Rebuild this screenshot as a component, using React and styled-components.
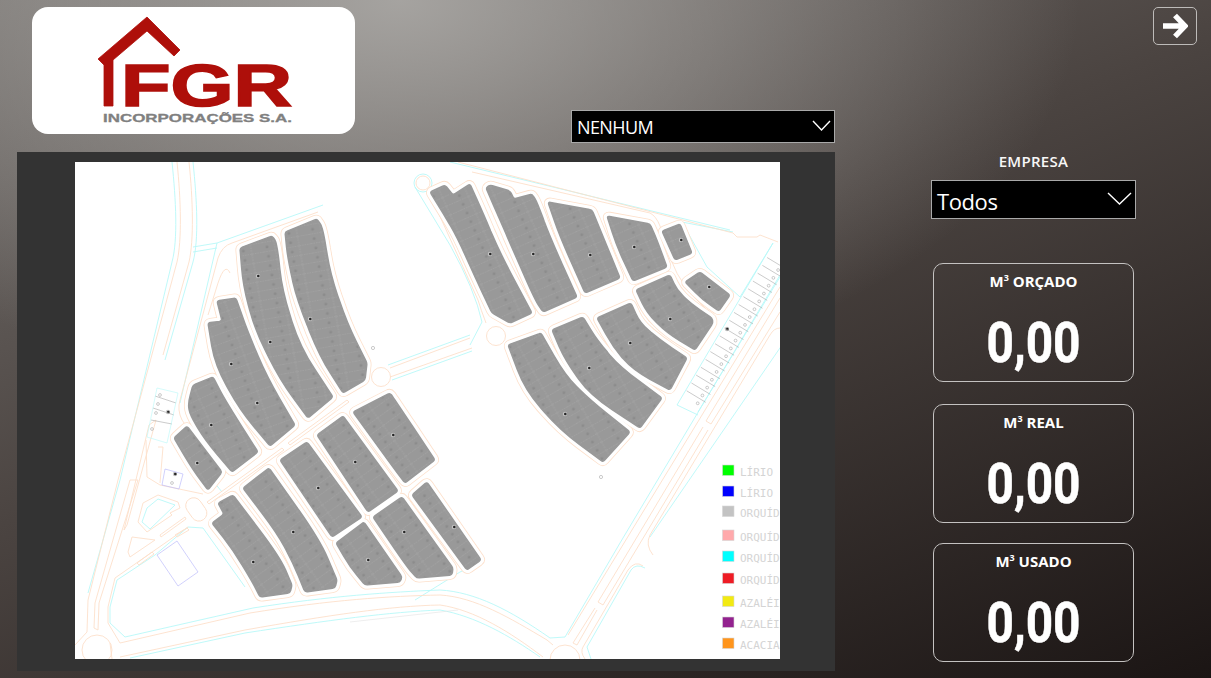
import styled, { createGlobalStyle } from 'styled-components';

const GlobalStyle = createGlobalStyle`
  html, body { margin: 0; padding: 0; background: #1c1615; }
  * { box-sizing: border-box; }
`;

const Page = styled.div`
  width: 1211px;
  height: 678px;
  overflow: hidden;
  display: grid;
  grid-template-columns: 835px 1fr;
  font-family: "Open Sans", "Noto Sans", sans-serif;
  color: #fff;
  background:
    radial-gradient(ellipse 680px 400px at 33% 0, rgba(172, 170, 167, 0.9), rgba(172, 170, 167, 0) 100%),
    linear-gradient(158deg, #75716e 0%, #4b4441 45%, #1b1514 100%);
`;

const LeftCol = styled.div`
  padding-left: 17px;
  display: flex;
  flex-direction: column;
`;

const TopRow = styled.div`
  height: 152px;
  display: flex;
  align-items: flex-start;
  justify-content: space-between;
`;

const LogoBox = styled.div`
  width: 323px;
  height: 127px;
  margin: 7px 0 0 15px;
  background: #fff;
  border-radius: 16px;
  svg { display: block; }
`;

const Select = styled.div`
  display: flex;
  align-items: center;
  justify-content: space-between;
  background: #000;
  border: 1px solid #a9a9a9;
  width: ${(p) => p.$w}px;
  height: ${(p) => p.$h}px;
  margin-top: ${(p) => p.$top || 0}px;
  padding: 0 2px 0 5px;
  font-size: ${(p) => p.$fs}px;
  letter-spacing: ${(p) => p.$ls}px;
  line-height: 1;
`;

const SelectText = styled.span`
  padding-top: ${(p) => p.$pt}px;
`;

const ChevronIcon = styled.svg`
  display: block;
  margin-top: -3px;
`;

const MapPanel = styled.div`
  width: 818px;
  height: 519px;
  background: #333;
  padding: 10px 0 0 58px;
`;

const MapSheet = styled.svg`
  display: block;
  width: 705px;
  height: 497px;
  background: #fff;
`;

const RightCol = styled.div`
  padding-left: 96px;
  display: flex;
  flex-direction: column;
  align-items: flex-start;
`;

const ArrowBtn = styled.button`
  align-self: flex-end;
  width: 44px;
  height: 38px;
  margin: 7px 14px 0 0;
  padding: 0;
  display: flex;
  align-items: center;
  justify-content: center;
  background: transparent;
  border: 1px solid #bdbbb9;
  border-radius: 5px;
`;

const FieldLabel = styled.div`
  width: 205px;
  margin-top: 107px;
  margin-bottom: 9px;
  height: 19px;
  line-height: 19px;
  text-align: center;
  font-size: 15px;
  font-weight: 600;
  letter-spacing: 0.3px;
  color: #f7f7f7;
`;

const Cards = styled.div`
  margin: 44px 0 0 2px;
  display: flex;
  flex-direction: column;
`;

const Card = styled.div`
  width: 201px;
  height: 119px;
  margin-top: ${(p) => p.$mt}px;
  border: 1px solid #c4c2c1;
  border-radius: 10px;
  text-align: center;
  padding-top: 8px;
`;

const CardTitle = styled.div`
  font-size: 15px;
  line-height: 19px;
  font-weight: 700;
  sup { font-size: 9px; line-height: 0; vertical-align: 6px; }
`;

const CardValue = styled.div`
  font-family: Roboto, "Open Sans", sans-serif;
  font-weight: 700;
  font-size: 55px;
  line-height: 64px;
  margin-top: 20px;
  transform: scaleX(0.87);
  -webkit-text-stroke: 0.5px #fff;
`;

const Chevron = ({ w, h }) => (
  <ChevronIcon width={w + 4} height={h + 4} viewBox={`-2 -2 ${w + 4} ${h + 4}`}>
    <polyline points={`0,0 ${w / 2},${h} ${w},0`} fill="none" stroke="#fff" strokeWidth="1.4" />
  </ChevronIcon>
);

// rounds a block outline: soft bends become curves, real corners stay tight
const smooth = (str) => {
  const pts = str.split(' ').map((s) => s.split(',').map(Number));
  const n = pts.length;
  let d = '';
  pts.forEach((v, i) => {
    const a = pts[(i + n - 1) % n];
    const b = pts[(i + 1) % n];
    const ax = a[0] - v[0];
    const ay = a[1] - v[1];
    const bx = b[0] - v[0];
    const by = b[1] - v[1];
    const la = Math.hypot(ax, ay);
    const lb = Math.hypot(bx, by);
    const cos = (ax * bx + ay * by) / (la * lb);
    const soft = cos < -0.85;
    const ca = soft ? la * 0.45 : Math.min(2.5, la * 0.4);
    const cb = soft ? lb * 0.45 : Math.min(2.5, lb * 0.4);
    const p1 = [v[0] + (ax / la) * ca, v[1] + (ay / la) * ca];
    const p2 = [v[0] + (bx / lb) * cb, v[1] + (by / lb) * cb];
    d += `${i === 0 ? 'M' : 'L'}${p1[0].toFixed(1)} ${p1[1].toFixed(1)} Q${v[0]} ${v[1]} ${p2[0].toFixed(1)} ${p2[1].toFixed(1)} `;
  });
  return `${d}Z`;
};

// block outlines in page coordinates, a is the direction of the lots
const blocks = [
  { a: -24, p: '430,192 445,185 453,195 470,184 483,213 500,253 532,313 510,323 492,313 475,277 457,237 443,213' },
  { a: -24, p: '486,188 490,185 510,191 514,199 532,194 537,202 550,237 577,297 543,312 535,300 513,250 500,220' },
  { a: -24, p: '548,202 592,210 597,222 620,278 585,293 560,237' },
  { a: -24, p: '607,216 650,224 657,240 667,267 633,281 617,247' },
  { a: -24, p: '662,231 680,224 692,253 675,260' },
  { a: -30, p: '685,282 700,272 730,295 719,311 703,300' },
  { a: -30, p: '636,290 670,275 677,290 690,303 712,318 713,323 695,350 667,333 647,313' },
  { a: -30, p: '597,318 631,303 640,323 660,340 687,358 670,390 633,370 613,347' },
  { a: -30, p: '552,330 583,317 597,340 620,367 662,398 640,428 590,395 565,360' },
  { a: -30, p: '508,345 541,333 565,375 590,400 630,432 603,462 560,430 525,390' },
  { a: -10, p: '285,232 317,219 323,228 330,273 347,323 367,363 365,380 343,393 320,357 297,300 288,260' },
  { a: -10, p: '240,248 272,236 277,243 282,290 300,347 333,397 308,418 280,380 255,330 243,285' },
  { a: -20, p: '208,323 222,321 217,301 236,298 247,330 267,377 295,425 270,446 240,410 215,365' },
  { a: -25, p: '188,403 193,385 213,377 225,400 258,452 232,472 205,440 190,415' },
  { a: -35, p: '174,438 187,426 222,472 208,490 193,470' },
  { a: -36, p: '353,412 390,393 395,400 435,460 405,483 395,470' },
  { a: -36, p: '317,435 343,416 398,491 368,512' },
  { a: -36, p: '280,460 307,442 362,517 332,537' },
  { a: -36, p: '243,488 269,468 320,540 337,580 335,588 305,592 293,563 277,533' },
  { a: -36, p: '212,523 224,514 218,503 233,495 280,557 292,585 290,593 260,597 253,583 233,550' },
  { a: -36, p: '336,543 364,522 402,577 400,582 365,585 350,567' },
  { a: -36, p: '373,517 402,497 453,568 452,575 417,578 407,567' },
  { a: -36, p: '412,495 427,482 481,560 467,570' },
];

const markers = [
  [490, 254], [533, 254], [590, 255], [634, 247], [681, 240], [709, 287], [670, 319], [630, 343], [589, 368], [565, 414],
  [258, 276], [310, 319], [270, 342], [231, 364], [257, 403], [211, 425], [197, 463], [393, 435], [355, 462], [318, 488],
  [293, 532], [253, 562], [368, 560], [404, 532], [454, 527], [168, 412], [727, 329], [175, 474],
];

const orangeRoads = [
  // left avenue
  'M177 162 C181 200 182 240 177 262 L118 480 L88 600 L87 632 L75 645',
  'M189 162 C193 200 194 240 189 262 L163 355',
  'M130 480 L95 603 L94 628 L98 630 L99 603 L138 480 Z',
  'M149 425 L156 420 L127 525 L124 530 Z',
  // lower avenue
  'M188 527 L115 578 L108 607 L108 623 L120 643 L250 613 C330 600 390 596 440 595 C475 597 510 618 547 640 L553 645',
  'M110 643 L112 659',
  'M120 657 L245 630 C330 615 390 606 440 605 C475 610 510 632 543 657',
  // diagonal avenue to the right
  'M780 287 L568 635',
  'M780 298 L706 421 L711 424 L780 312',
  'M703 427 L598 602 L603 605 L708 430',
  'M595 608 L573 643 L577 645 L597 610',
  'M780 328 Q774 328 770 335 L650 535 Q645 545 653 555',
  'M643 566 Q635 560 628 570 L583 647 Q580 652 585 659',
  // connecting road between clusters
  'M390 368 L470 338 M390 377 L472 348',
  // middle strip of the left cluster
  'M207 502 L282 448 L284 450 L209 504 Z',
  'M288 443 L347 400 L349 402 L290 445 Z',
  // top edge
  'M458 162 L733 233 L737 237 L757 237 L760 235 L778 242',
  'M472 172 L650 213 Q656 216 660 226 L672 262 Q680 285 707 310',
  'M428 190 L478 300 Q481 310 486 323',
  // left cluster edge
  'M318 212 L232 243 Q222 246 218 258 L180 400 Q177 410 182 420 L222 478',
  'M146 440 L147 477 L160 485 L203 494',
  'M158 447 L163 447 L160 483',
  'M230 273 Q225 262 218 283 L208 315',
  // islands
  'M143 503 L158 495 L178 502 L180 508 L170 513 L172 515 L147 532 L138 522 Z',
  'M132 537 L155 540 L130 557 L128 552 Z',
  'M160 535 L185 517 L186 519 L161 537 Z',
  'M137 563 L152 552 L154 554 L139 565 Z',
  'M175 535 L187 528 L189 530 L177 537 Z',
];

const cyanRoads = [
  'M172 162 C176 200 178 240 172 262 L120 480 L88 593',
  'M193 162 C197 200 199 240 193 262 L165 360',
  'M203 528 L188 527 L155 555 L117 580 L110 607 L110 623 L125 637 L253 608 C330 596 390 592 440 590 C475 592 510 610 550 638 L565 637 L620 543 L780 275',
  'M130 658 L245 633 C330 620 390 612 440 610 C475 616 510 636 540 657',
  'M782 345 L650 537',
  'M645 568 Q636 563 631 570 L587 647 L591 659',
  'M698 412 L780 277 M677 405 L773 243 M677 405 L698 415',
  'M388 365 L470 335 M392 380 L472 351',
  'M450 162 L730 230',
  'M415 187 L450 245 Q475 290 482 322',
  'M682 222 L707 267 L740 297 M682 222 L733 232 M773 243 L740 297',
  'M323 205 L217 243 L180 403 M193 247 L217 243 M193 252 L217 248',
  'M147 508 L158 499 L175 505 L150 529 L142 522 Z',
  'M203 528 L245 587',
  'M415 600 L460 572 L483 562',
  'M180 440 L222 492',
];

const legend = [
  ['#00ff00', 'LÍRIO', 465],
  ['#0000ff', 'LÍRIO', 486],
  ['#c3c3c3', 'ORQUÍDEA', 506],
  ['#ffa9ab', 'ORQUÍDEA', 530],
  ['#00ffff', 'ORQUÍDEA', 551],
  ['#ee1c25', 'ORQUÍDEA', 573],
  ['#f2ea12', 'AZALÉIA', 596],
  ['#93228f', 'AZALÉIA', 617],
  ['#ff951c', 'ACACIA', 638],
];

const parkingLots = Array.from({ length: 18 }, (_, i) => ({
  x: 697.7 + i * 4.73,
  y: 403.3 - i * 7.84,
}));

const Map = () => (
  <MapSheet viewBox="75 162 705 497">
    <defs>
      {[...new Set(blocks.map((b) => b.a))].map((a) => (
        <pattern
          key={a}
          id={`lots${a}`}
          width="24"
          height="9.5"
          patternUnits="userSpaceOnUse"
          patternTransform={`rotate(${a})`}
        >
          <rect width="24" height="9.5" fill="#999" />
          <path d="M0 9 H24 M12 0 V9.5" stroke="#aeaeae" strokeWidth="0.4" strokeDasharray="1.5 1" />
          <circle cx="4" cy="4.5" r="1.5" fill="#8c8c8c" />
        </pattern>
      ))}
    </defs>

    <g fill="none" stroke="#b8f8f8" strokeWidth="0.9">
      {cyanRoads.map((d) => (
        <path key={d} d={d} />
      ))}
      <circle cx="423" cy="183" r="9" />
      <path d="M482 322 L470 345" />
    </g>
    <g fill="none" stroke="#fde0cb" strokeWidth="0.9">
      {orangeRoads.map((d) => (
        <path key={d} d={d} />
      ))}
      <circle cx="97" cy="650" r="15" />
      <circle cx="565" cy="660" r="15" />
      <circle cx="381" cy="377" r="9.5" />
      <circle cx="496" cy="336" r="9.5" />
      <circle cx="423" cy="183" r="7" />
      <rect x="188" y="497" width="16" height="25" rx="8" transform="rotate(-35 196 509)" />
    </g>

    {blocks.map((b) => (
      <path key={b.p} d={smooth(b.p)} fill="none" stroke="#fde0cb" strokeWidth="9.5" strokeLinejoin="round" />
    ))}
    {blocks.map((b) => (
      <path key={b.p} d={smooth(b.p)} fill="none" stroke="#fff" strokeWidth="7.9" strokeLinejoin="round" />
    ))}
    {blocks.map((b) => (
      <path
        key={b.p}
        d={smooth(b.p)}
        fill={`url(#lots${b.a})`}
        stroke="#999"
        strokeWidth="1.5"
        strokeLinejoin="round"
      />
    ))}

    {markers.map(([x, y]) => (
      <g key={`${x}-${y}`}>
        <circle cx={x} cy={y} r="2.2" fill="#c4c4c4" />
        <circle cx={x + 0.3} cy={y} r="1.3" fill="#262626" />
      </g>
    ))}

    <g stroke="#a8a8a8" strokeWidth="0.6" fill="none">
      {parkingLots.map(({ x, y }) => (
        <g key={x}>
          <line x1={x - 11} y1={y - 12.5} x2={x + 8} y2={y - 1} />
          <circle cx={x} cy={y} r="1.4" />
        </g>
      ))}
      <circle cx="373" cy="348" r="1.6" />
      <circle cx="601" cy="477" r="1.6" />
      <circle cx="160" cy="395" r="1.4" />
      <circle cx="158" cy="404" r="1.4" />
      <circle cx="156" cy="413" r="1.4" />
      <circle cx="152" cy="429" r="1.4" />
      <circle cx="172" cy="483" r="1.4" />
      <path d="M155 396 L176 403 M153 408 L174 415 M151 420 L172 424" />
      <path d="M157 388 L178 393 L167 443 L147 437 Z" stroke="#b8f8f8" />
      <path d="M350 622 L458 610" stroke="#e2e2e2" />
    </g>

    <g fill="none" stroke="#bdbdfa" strokeWidth="0.7">
      <polygon points="157,555 177,541 198,572 178,586" />
      <polygon points="165,469 183,474 179,489 162,485" />
    </g>

    {legend.map(([color, name, y]) => (
      <g key={y}>
        <rect x="722.5" y={y} width="11.5" height="10.5" fill={color} stroke="#d6d6d6" strokeWidth="0.6" />
        <text x="740" y={y + 11} fontFamily="'DejaVu Sans Mono', monospace" fontSize="11" fill="#d4d4d4">
          {name}
        </text>
      </g>
    ))}
  </MapSheet>
);

const Logo = () => (
  <svg width="323" height="127" viewBox="32 7 323 127">
    <polygon
      points="98,59 147,17 180,50 174,56 147,31 113,60 113,106 104,106 104,65"
      fill="#ae0f0a"
      stroke="#ae0f0a"
      strokeWidth="0.8"
      strokeLinejoin="round"
    />
    <text
      x="121"
      y="106"
      fontFamily="'Liberation Sans', sans-serif"
      fontWeight="700"
      fontSize="60"
      fill="#ae0f0a"
      stroke="#ae0f0a"
      strokeWidth="1.6"
      textLength="171"
      lengthAdjust="spacingAndGlyphs"
    >
      FGR
    </text>
    <text
      x="103"
      y="122"
      fontFamily="'Liberation Sans', sans-serif"
      fontWeight="700"
      fontSize="11.5"
      fill="#808080"
      stroke="#808080"
      strokeWidth="0.3"
      textLength="189"
      lengthAdjust="spacingAndGlyphs"
    >
      INCORPORAÇÕES S.A.
    </text>
  </svg>
);

const kpis = [
  { name: 'ORÇADO', mt: 0 },
  { name: 'REAL', mt: 22 },
  { name: 'USADO', mt: 20 },
];

export default function App() {
  return (
    <>
      <GlobalStyle />
      <Page>
        <LeftCol>
          <TopRow>
            <LogoBox>
              <Logo />
            </LogoBox>
            <Select $w={264} $h={33} $top={110} $fs={18} $ls={-0.6}>
              <SelectText $pt={1}>NENHUM</SelectText>
              <Chevron w={17} h={9} />
            </Select>
          </TopRow>
          <MapPanel>
            <Map />
          </MapPanel>
        </LeftCol>
        <RightCol>
          <ArrowBtn aria-label="Avançar">
            <svg width="26" height="26" viewBox="0 0 26 26">
              <path d="M1 13 H22 M13 2.5 L23 13 L13 23.5" fill="none" stroke="#fff" strokeWidth="5.4" />
            </svg>
          </ArrowBtn>
          <FieldLabel>EMPRESA</FieldLabel>
          <Select $w={205} $h={39} $fs={22} $ls={-0.4}>
            <SelectText $pt={2}>Todos</SelectText>
            <Chevron w={23} h={11} />
          </Select>
          <Cards>
            {kpis.map((k) => (
              <Card key={k.name} $mt={k.mt}>
                <CardTitle>
                  M<sup>3</sup> {k.name}
                </CardTitle>
                <CardValue>0,00</CardValue>
              </Card>
            ))}
          </Cards>
        </RightCol>
      </Page>
    </>
  );
}
